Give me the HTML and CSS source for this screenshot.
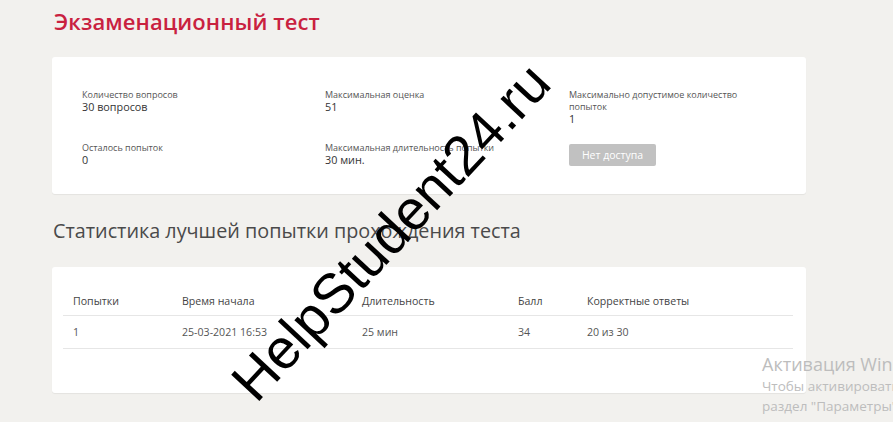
FILE: index.html
```html
<!DOCTYPE html>
<html lang="ru">
<head>
<meta charset="utf-8">
<title>Экзаменационный тест</title>
<link rel="stylesheet" href="styles.css">
</head>
<body>
<div class="page">
  <h1 class="title">Экзаменационный тест</h1>
  <section class="card info">
    <div class="grid">
      <div class="item">
        <div class="label">Количество вопросов</div>
        <div class="value">30 вопросов</div>
      </div>
      <div class="item">
        <div class="label">Максимальная оценка</div>
        <div class="value">51</div>
      </div>
      <div class="item">
        <div class="label">Максимально допустимое количество попыток</div>
        <div class="value">1</div>
      </div>
      <div class="item">
        <div class="label">Осталось попыток</div>
        <div class="value">0</div>
      </div>
      <div class="item">
        <div class="label">Максимальная длительность попытки</div>
        <div class="value">30 мин.</div>
      </div>
      <div class="item">
        <button class="btn" type="button">Нет доступа</button>
      </div>
    </div>
  </section>
  <h2 class="subtitle">Статистика лучшей попытки прохождения теста</h2>
  <section class="card stats">
    <table class="table">
      <thead>
        <tr><th class="c1">Попытки</th><th class="c2">Время начала</th><th class="c3">Длительность</th><th class="c4">Балл</th><th class="c5">Корректные ответы</th></tr>
      </thead>
      <tbody>
        <tr><td>1</td><td>25-03-2021 16:53</td><td>25 мин</td><td>34</td><td>20 из 30</td></tr>
      </tbody>
    </table>
  </section>
</div>
<div class="watermark">HelpStudent24.ru</div>
<div class="activation">
  <div class="act-title">Активация Windows</div>
  <div class="act-line">Чтобы активировать Windows, перейдите в</div>
  <div class="act-line">раздел "Параметры".</div>
</div>
</body>
</html>
```
FILE: styles.css
```css
html, body {
  margin: 0;
  padding: 0;
  background: #f2f1ee;
  width: 893px;
  height: 422px;
  overflow: hidden;
  font-family: "Open Sans", "Noto Sans", sans-serif;
}
.page {
  padding: 0 0 0 52px;
  width: 754px;
}
.title {
  margin: 0;
  padding: 6px 0 0 2px;
  height: 57px;
  box-sizing: border-box;
  font-size: 22px;
  font-weight: 600;
  color: #c9213f;
  line-height: 30px;
  letter-spacing: 0.1px;
}
.card {
  background: #fff;
  border-radius: 3px;
  box-shadow: 0 1px 1px rgba(0,0,0,0.06);
}
.info {
  height: 137px;
  box-sizing: border-box;
  padding: 32px 20px 0 30px;
}
.grid {
  display: grid;
  grid-template-columns: 243px 244px 1fr;
  row-gap: 17px;
}
.label {
  font-size: 9px;
  line-height: 12px;
  color: #555;
  max-width: 180px;
}
.value {
  font-size: 10.8px;
  line-height: 12px;
  color: #333;
}
.btn {
  margin-top: -7px;
  width: 87px;
  height: 22px;
  border: 0;
  border-radius: 2px;
  background: #c1c1c1;
  color: #fff;
  font-family: inherit;
  font-size: 10.5px;
  padding: 0;
}
.subtitle {
  margin: 0;
  padding: 24px 0 0 1px;
  height: 73px;
  box-sizing: border-box;
  font-size: 19.8px;
  font-weight: 400;
  color: #4a4a4a;
  line-height: 26px;
}
.stats {
  height: 126px;
  box-sizing: border-box;
  padding: 20px 12px 0 11px;
}
.table {
  width: 730px;
  border-collapse: collapse;
  table-layout: fixed;
}
.table th, .table td {
  text-align: left;
  padding: 0 0 0 10px;
  font-size: 10.6px;
  color: #444;
  font-weight: 400;
}
.table th {
  height: 28px;
  border-bottom: 1px solid #e6e6e6;
}
.table td {
  height: 32px;
  color: #555;
  border-bottom: 1px solid #e6e6e6;
}
.c1 { width: 99px; }
.c2 { width: 170px; }
.c3 { width: 146px; }
.c4 { width: 59px; }
.watermark {
  position: absolute;
  left: 391px;
  top: 232px;
  transform: translate(-50%, -50%) rotate(-47deg);
  font-family: "Liberation Sans", Arial, sans-serif;
  font-size: 56px;
  line-height: 1;
  color: #000;
  white-space: nowrap;
}
.activation {
  position: absolute;
  left: 762px;
  top: 353px;
  white-space: nowrap;
  font-family: "Open Sans", "Noto Sans", sans-serif;
  color: #bdbdbd;
}
.act-title {
  font-size: 18px;
  line-height: 23px;
}
.act-line {
  font-size: 13.5px;
  line-height: 20px;
}
```
